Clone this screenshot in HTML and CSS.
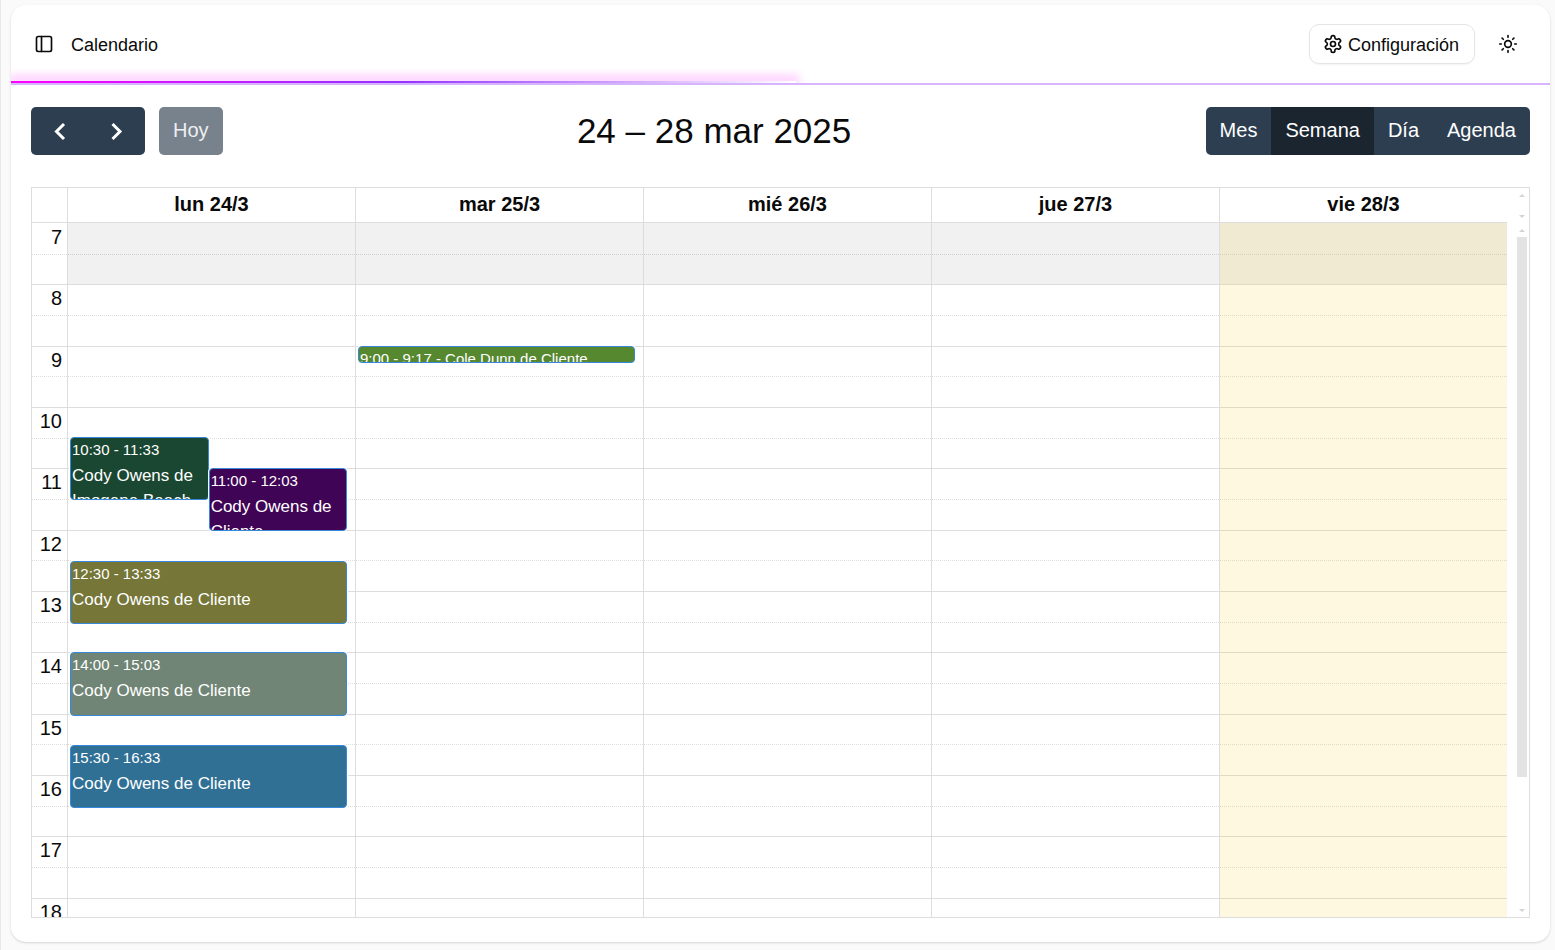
FILE: index.html
```html
<!DOCTYPE html>
<html lang="es">
<head>
<meta charset="utf-8">
<meta name="viewport" content="width=device-width, initial-scale=1">
<title>Calendario</title>
<link rel="stylesheet" href="styles.css">
</head>
<body>
<main class="panel">
  <header class="topbar">
    <button class="icon-btn" type="button" aria-label="Alternar barra lateral">
      <svg class="icon" viewBox="0 0 24 24"><rect x="3" y="3" width="18" height="18" rx="2"/><path d="M9 3v18"/></svg>
    </button>
    <h1 class="page-title">Calendario</h1>
    <button class="config-btn" type="button">
      <svg class="icon" viewBox="0 0 24 24"><path d="M12.22 2h-.44a2 2 0 0 0-2 2v.18a2 2 0 0 1-1 1.73l-.43.25a2 2 0 0 1-2 0l-.15-.08a2 2 0 0 0-2.73.73l-.22.38a2 2 0 0 0 .73 2.73l.15.1a2 2 0 0 1 1 1.72v.51a2 2 0 0 1-1 1.74l-.15.09a2 2 0 0 0-.73 2.73l.22.38a2 2 0 0 0 2.73.73l.15-.08a2 2 0 0 1 2 0l.43.25a2 2 0 0 1 1 1.73V20a2 2 0 0 0 2 2h.44a2 2 0 0 0 2-2v-.18a2 2 0 0 1 1-1.73l.43-.25a2 2 0 0 1 2 0l.15.08a2 2 0 0 0 2.73-.73l.22-.39a2 2 0 0 0-.73-2.73l-.15-.08a2 2 0 0 1-1-1.74v-.5a2 2 0 0 1 1-1.74l.15-.09a2 2 0 0 0 .73-2.73l-.22-.38a2 2 0 0 0-2.73-.73l-.15.08a2 2 0 0 1-2 0l-.43-.25a2 2 0 0 1-1-1.73V4a2 2 0 0 0-2-2z"/><circle cx="12" cy="12" r="3"/></svg>
      <span>Configuración</span>
    </button>
    <button class="icon-btn" type="button" aria-label="Cambiar tema">
      <svg class="icon" viewBox="0 0 24 24"><circle cx="12" cy="12" r="4"/><path d="M12 2v2M12 20v2M4.93 4.93l1.41 1.41M17.66 17.66l1.41 1.41M2 12h2M20 12h2M6.34 17.66l-1.41 1.41M19.07 4.93l-1.41 1.41"/></svg>
    </button>
    <div class="glow"></div>
  </header>

  <section class="calendar">
    <div class="toolbar">
      <div class="tools">
        <div class="group">
          <button class="btn arrow" type="button" aria-label="Anterior"><svg class="chevron" viewBox="0 0 24 24"><path d="M16 5l-7.500 7.500 7.500 7.500"/></svg></button>
          <button class="btn arrow" type="button" aria-label="Siguiente"><svg class="chevron" viewBox="0 0 24 24"><path d="M7.500 5l7.500 7.500-7.500 7.500"/></svg></button>
        </div>
        <div class="group"><button class="btn today" type="button" disabled>Hoy</button></div>
      </div>
      <h2 class="range">24 – 28 mar 2025</h2>
      <div class="group">
        <button class="btn" type="button">Mes</button>
        <button class="btn active" type="button" aria-pressed="true">Semana</button>
        <button class="btn" type="button">Día</button>
        <button class="btn" type="button">Agenda</button>
      </div>
    </div>

    <div class="grid">
      <div class="head">
        <div class="cols">
          <span></span>
          <div class="day-name">lun 24/3</div>
          <div class="day-name">mar 25/3</div>
          <div class="day-name">mié 26/3</div>
          <div class="day-name">jue 27/3</div>
          <div class="day-name">vie 28/3</div>
        </div>
        <div class="scrollbar"><i class="up"></i><i class="down"></i></div>
      </div>
      <div class="body">
        <div class="timeline">
          <div class="cols days">
            <span></span>
            <div class="day"><div class="closed"></div>
              <a href="#" class="event green half"><span class="time">10:30 - 11:33</span><span class="name">Cody Owens de Imogene Beach</span></a>
              <a href="#" class="event purple half-right"><span class="time">11:00 - 12:03</span><span class="name">Cody Owens de Cliente</span></a>
              <a href="#" class="event olive"><span class="time">12:30 - 13:33</span><span class="name">Cody Owens de Cliente</span></a>
              <a href="#" class="event sage"><span class="time">14:00 - 15:03</span><span class="name">Cody Owens de Cliente</span></a>
              <a href="#" class="event blue"><span class="time">15:30 - 16:33</span><span class="name">Cody Owens de Cliente</span></a>
            </div>
            <div class="day"><div class="closed"></div>
              <a href="#" class="event lime short"><span class="time">9:00 - 9:17 - Cole Dunn de Cliente</span></a>
            </div>
            <div class="day"><div class="closed"></div></div>
            <div class="day"><div class="closed"></div></div>
            <div class="day current"><div class="closed"></div></div>
          </div>
          <table class="slots">
            <tbody>
              <tr><th scope="row">7</th><td></td></tr><tr class="minor"><th></th><td></td></tr>
              <tr><th scope="row">8</th><td></td></tr><tr class="minor"><th></th><td></td></tr>
              <tr><th scope="row">9</th><td></td></tr><tr class="minor"><th></th><td></td></tr>
              <tr><th scope="row">10</th><td></td></tr><tr class="minor"><th></th><td></td></tr>
              <tr><th scope="row">11</th><td></td></tr><tr class="minor"><th></th><td></td></tr>
              <tr><th scope="row">12</th><td></td></tr><tr class="minor"><th></th><td></td></tr>
              <tr><th scope="row">13</th><td></td></tr><tr class="minor"><th></th><td></td></tr>
              <tr><th scope="row">14</th><td></td></tr><tr class="minor"><th></th><td></td></tr>
              <tr><th scope="row">15</th><td></td></tr><tr class="minor"><th></th><td></td></tr>
              <tr><th scope="row">16</th><td></td></tr><tr class="minor"><th></th><td></td></tr>
              <tr><th scope="row">17</th><td></td></tr><tr class="minor"><th></th><td></td></tr>
              <tr><th scope="row">18</th><td></td></tr><tr class="minor"><th></th><td></td></tr>
            </tbody>
          </table>
        </div>
        <div class="scrollbar"><i class="up"></i><b class="thumb"></b><i class="down"></i></div>
      </div>
    </div>
  </section>
</main>
</body>
</html>
```
FILE: styles.css
```css
* { box-sizing: border-box; }
body {
  margin: 0;
  height: 100vh;
  padding: 5px 5px 8px 10px;
  border-left: 1px solid #e8e8e8;
  background: #fafafa;
  color: #0a0a0a;
  font-family: "Liberation Sans", Arial, sans-serif;
  font-size: 18px;
  display: flex;
}
button { font: inherit; color: inherit; border: 0; background: none; padding: 0; cursor: pointer; }
h1, h2 { margin: 0; font-weight: 400; }

.panel {
  flex: 1;
  min-width: 0;
  display: flex;
  flex-direction: column;
  background: #fff;
  border-radius: 15px;
  box-shadow: 0 1px 3px rgba(0, 0, 0, .1), 0 1px 2px rgba(0, 0, 0, .06);
}

/* Top bar */
.topbar {
  position: relative;
  display: flex;
  align-items: center;
  height: 80px;
  padding: 0 27px 0 18px;
  border-bottom: 2px solid #d8b4fe;
}
.icon-btn { width: 30px; height: 30px; display: grid; place-items: center; }
.icon {
  width: 20px;
  height: 20px;
  fill: none;
  stroke: currentColor;
  stroke-width: 2;
  stroke-linecap: round;
  stroke-linejoin: round;
}
.page-title { margin-left: 12px; margin-right: auto; padding-top: 2px; font-size: 18px; }
.config-btn {
  display: flex;
  align-items: center;
  gap: 5px;
  height: 40px;
  margin-right: 18px;
  padding: 0 15px 0 13px;
  border: 1px solid #e5e5e5;
  border-radius: 10px;
  box-shadow: 0 1px 2px rgba(0, 0, 0, .05);
}
.config-btn span { padding-top: 2px; }
.glow {
  position: absolute;
  left: 0;
  bottom: 0;
  width: 51%;
  height: 2px;
  background: linear-gradient(90deg, #f0f, #9333ff 50%, #fff);
  box-shadow: 0 -2px 10px 3px rgba(255, 0, 255, .24);
  clip-path: inset(-20px -12px 0 0);
}

/* Toolbar */
.calendar {
  flex: 1;
  min-height: 0;
  display: flex;
  flex-direction: column;
  gap: 32px;
  padding: 22px 20px 24px;
}
.toolbar { display: flex; align-items: center; justify-content: space-between; }
.tools { display: flex; gap: 14px; }
.group { display: flex; border-radius: 5px; overflow: hidden; }
.btn { height: 48px; padding: 0 14px 2px; background: #2c3e50; color: #fff; font-size: 20px; }
.arrow { width: 57px; padding: 0; display: grid; place-items: center; }
.today { background: #78828d; color: #eef0f1; }
.active { background: #1a252f; }
.chevron { width: 24px; height: 24px; fill: none; stroke: currentColor; stroke-width: 3; }
.range { font-size: 35px; line-height: 48px; }

/* Week grid */
.grid {
  flex: 1;
  min-height: 0;
  display: flex;
  flex-direction: column;
  border: 1px solid #ddd;
}
.head, .body { display: grid; grid-template-columns: 1fr 22px; }
.cols { display: grid; grid-template-columns: 35px repeat(5, 1fr); }
.head .cols { height: 35px; border-bottom: 1px solid #ddd; }
.day-name { border-left: 1px solid #ddd; text-align: center; font-size: 20px; line-height: 32px; font-weight: 700; }
.body { flex: 1; min-height: 0; overflow: hidden; grid-template-rows: 100%; }
.timeline { position: relative; height: 736px; }
.days { position: absolute; inset: 0; }
.day { position: relative; border-left: 1px solid #ddd; }
.current { background: rgba(255, 205, 47, .15); }
.closed { height: 8.333%; background: rgba(0, 0, 0, .055); }

.slots { display: block; height: 100%; }
.slots tbody { display: grid; grid-template-rows: repeat(24, minmax(0, 1fr)); height: 100%; }
.slots tr { display: grid; grid-template-columns: 35px 1fr; border-top: 1px solid #ddd; }
.slots tr:first-child { border-top-color: transparent; }
.slots .minor { border-top: 1px dotted #ddd; }
.slots th { padding: 0 5px 0 0; font-size: 20px; line-height: 27px; font-weight: 400; text-align: right; }
.slots td { padding: 0; }

/* Events */
.event {
  position: absolute;
  z-index: 1;
  left: 2px;
  right: 8px;
  height: 8.6%;
  padding: 0 1px;
  overflow: hidden;
  border: 1px solid #3788d8;
  border-radius: 4px;
  box-shadow: 0 0 0 1px #fff;
  color: #fff;
  text-decoration: none;
}
.time, .name { display: block; }
.time { font-size: 15px; line-height: 24px; }
.name { font-size: 17px; line-height: 25px; padding-top: 1px; }
.green { top: 29.1%; background: #1a4731; }
.purple { top: 33.3%; background: #3f0455; }
.olive { top: 45.9%; background: #757637; }
.sage { top: 58.333%; background: #708575; }
.blue { top: 70.9%; background: #307095; }
.lime { top: 16.667%; background: #56882f; }
.half { right: 51%; }
.half-right { left: 49%; }
.short { height: 17px; }
.short .time { white-space: nowrap; }

/* Scrollbars */
.scrollbar { display: flex; flex-direction: column; align-items: center; justify-content: space-between; padding: 6px 0 5px 8px; }
.up, .down { border: 3px solid transparent; }
.up { border-top: 0; border-bottom-color: #d4d4d4; }
.down { border-bottom: 0; border-top-color: #d4d4d4; }
.thumb { width: 10px; height: 79%; margin: 5px 0 auto; background: #e3e3e3; }
```
